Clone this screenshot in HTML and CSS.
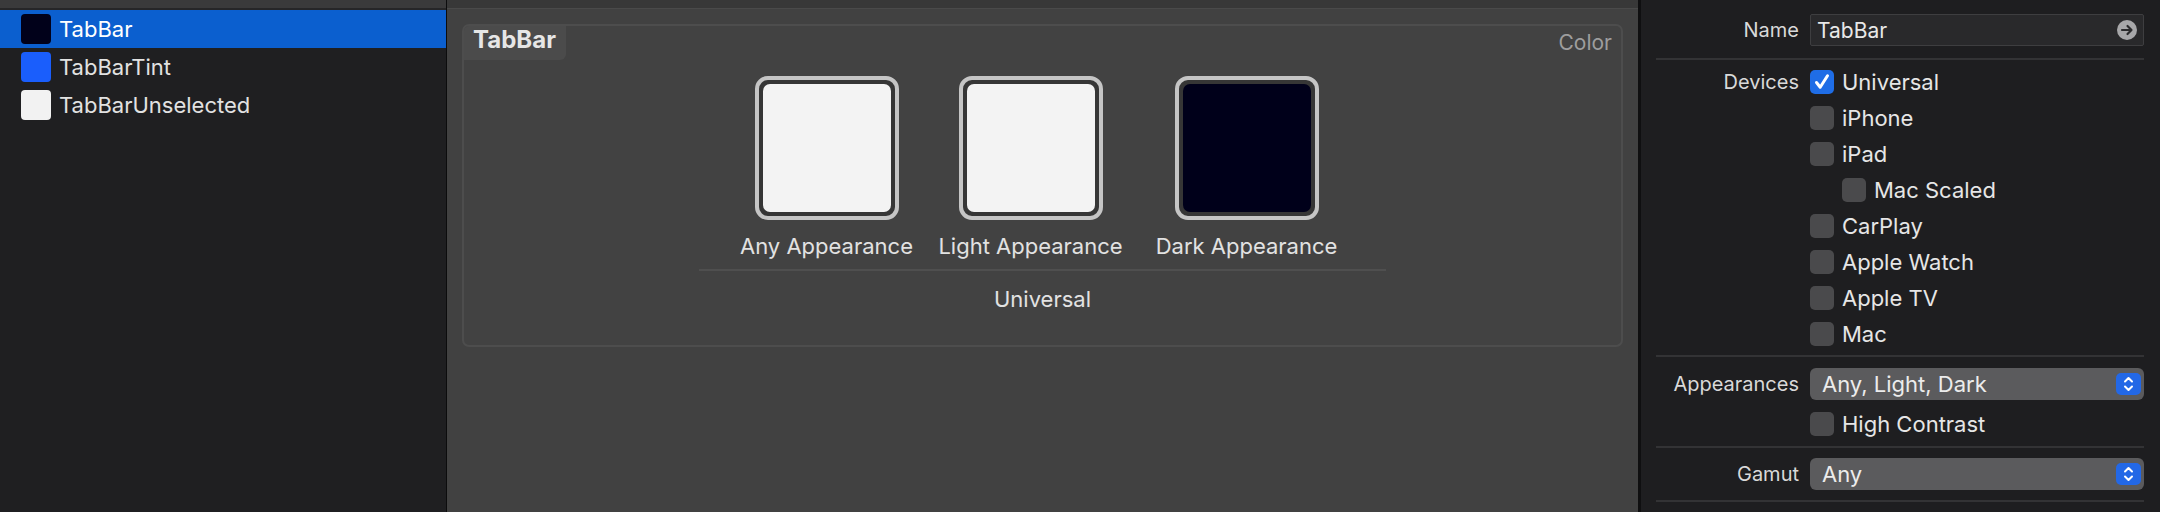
FILE: index.html
```html
<!DOCTYPE html>
<html>
<head>
<meta charset="utf-8">
<link rel="stylesheet" href="styles.css">
</head>
<body>
<div class="app">
  <aside class="sidebar">
    <div class="sidebar-strip"></div>
    <ul class="assets">
      <li class="asset selected"><span class="chip chip-dark"></span><span class="asset-name">TabBar</span></li>
      <li class="asset"><span class="chip chip-blue"></span><span class="asset-name">TabBarTint</span></li>
      <li class="asset"><span class="chip chip-light"></span><span class="asset-name">TabBarUnselected</span></li>
    </ul>
  </aside>

  <main class="editor">
    <div class="editor-strip"></div>
    <section class="card">
      <header class="card-head">
        <span class="card-title">TabBar</span>
        <span class="card-kind">Color</span>
      </header>
      <div class="slots">
        <div class="slot slot-any">
          <div class="well"><div class="fill fill-light"></div></div>
          <div class="slot-label">Any Appearance</div>
        </div>
        <div class="slot slot-light">
          <div class="well"><div class="fill fill-light"></div></div>
          <div class="slot-label">Light Appearance</div>
        </div>
        <div class="slot slot-dark">
          <div class="well"><div class="fill fill-dark"></div></div>
          <div class="slot-label">Dark Appearance</div>
        </div>
      </div>
      <div class="divider"></div>
      <div class="group-label">Universal</div>
    </section>
  </main>

  <aside class="inspector">
    <div class="row row-field">
      <span class="label">Name</span>
      <div class="field">
        <span>TabBar</span>
        <svg class="go" width="20" height="20" viewBox="0 0 20 20"><circle cx="10" cy="10" r="10" fill="#a7a7a9"/><path d="M5 10 H14.5 M10.5 6 L14.5 10 L10.5 14" fill="none" stroke="#2a2a2c" stroke-width="2.2" stroke-linecap="round" stroke-linejoin="round"/></svg>
      </div>
    </div>
    <div class="sep sep-name"></div>

    <div class="devices">
      <div class="row row-check"><span class="label">Devices</span><div class="check"><span class="box box-on"><svg width="24" height="24" viewBox="0 0 24 24"><path d="M6.5 12.5 L10.2 17.2 L17.5 5.8" fill="none" stroke="#fff" stroke-width="3" stroke-linecap="round" stroke-linejoin="round"/></svg></span><span>Universal</span></div></div>
      <div class="row row-check"><span class="label"></span><div class="check"><span class="box"></span><span>iPhone</span></div></div>
      <div class="row row-check"><span class="label"></span><div class="check"><span class="box"></span><span>iPad</span></div></div>
      <div class="row row-check"><span class="label"></span><div class="check indent"><span class="box"></span><span>Mac Scaled</span></div></div>
      <div class="row row-check"><span class="label"></span><div class="check"><span class="box"></span><span>CarPlay</span></div></div>
      <div class="row row-check"><span class="label"></span><div class="check"><span class="box"></span><span>Apple Watch</span></div></div>
      <div class="row row-check"><span class="label"></span><div class="check"><span class="box"></span><span>Apple TV</span></div></div>
      <div class="row row-check"><span class="label"></span><div class="check"><span class="box"></span><span>Mac</span></div></div>
    </div>
    <div class="sep sep-devices"></div>

    <div class="row row-popup row-appear">
      <span class="label">Appearances</span>
      <div class="popup"><span>Any, Light, Dark</span><span class="stepper"><svg width="25" height="22" viewBox="0 0 25 22"><path d="M9 8.5 L12.5 5 L16 8.5 M9 13.5 L12.5 17 L16 13.5" fill="none" stroke="#fff" stroke-width="2" stroke-linecap="round" stroke-linejoin="round"/></svg></span></div>
    </div>
    <div class="row row-check row-contrast"><span class="label"></span><div class="check"><span class="box"></span><span>High Contrast</span></div></div>
    <div class="sep sep-appear"></div>

    <div class="row row-popup row-gamut">
      <span class="label">Gamut</span>
      <div class="popup"><span>Any</span><span class="stepper"><svg width="25" height="22" viewBox="0 0 25 22"><path d="M9 8.5 L12.5 5 L16 8.5 M9 13.5 L12.5 17 L16 13.5" fill="none" stroke="#fff" stroke-width="2" stroke-linecap="round" stroke-linejoin="round"/></svg></span></div>
    </div>
    <div class="sep sep-gamut"></div>
  </aside>
</div>
</body>
</html>
```

FILE: styles.css
```css
* { box-sizing: border-box; }
html, body { margin: 0; padding: 0; }
body {
  width: 2160px;
  height: 512px;
  overflow: hidden;
  background: #1e1e20;
  font-family: "Inter", "Liberation Sans", sans-serif;
  font-size: 21px;
  color: #e4e4e4;
}
.app {
  display: flex;
  height: 512px;
}

/* Sidebar */
.sidebar {
  width: 447px;
  flex: none;
  background: #1f1f21;
  border-right: 1px solid #0c0c0d;
}
.sidebar-strip {
  height: 8px;
  background: #3a3a3b;
  border-bottom: 2px solid #262628;
  box-sizing: content-box;
}
.assets {
  list-style: none;
  margin: 0;
  padding: 0;
}
.asset {
  height: 38px;
  display: flex;
  align-items: center;
  padding-left: 21px;
  gap: 8px;
  color: #e2e2e2;
  font-size: 22px;
}
.asset.selected {
  background: #0b5fcf;
  color: #ffffff;
}
.chip {
  width: 30px;
  height: 30px;
  border-radius: 4px;
  flex: none;
}
.chip-dark { background: #01011a; }
.chip-blue { background: #1a5efc; }
.chip-light { background: #f2f2f2; }

/* Editor */
.editor {
  width: 1194px;
  flex: none;
  background: #414141;
  border-right: 3px solid #0f0f10;
}
.editor-strip {
  height: 8px;
  background: #383838;
  border-bottom: 1px solid #4a4a4a;
  box-sizing: content-box;
}
.card {
  margin: 15px 15px 0 15px;
  height: 323px;
  border: 2px solid #4d4d4d;
  border-radius: 7px;
  background: #424242;
}
.card-head {
  height: 34px;
  display: flex;
  justify-content: space-between;
  align-items: flex-start;
}
.card-title {
  width: 102px;
  height: 34px;
  background: #4b4b4b;
  border-top-left-radius: 5px;
  border-bottom-right-radius: 6px;
  font-weight: 700;
  font-size: 24px;
  line-height: 27px;
  padding: 0 0 7px 9px;
  color: #e6e6e6;
}
.card-kind {
  line-height: 34px;
  padding-right: 9px;
  color: #9e9e9e;
}
.slots {
  display: flex;
  justify-content: center;
  margin-top: 16px;
}
.slot {
  display: flex;
  flex-direction: column;
  align-items: center;
}
.slot-any { width: 200px; }
.slot-light { width: 208px; }
.slot-dark { width: 224px; }
.well {
  width: 144px;
  height: 144px;
  border: 4px solid #c5c5c5;
  border-radius: 13px;
  background: #363636;
  padding: 4px;
}
.fill {
  width: 100%;
  height: 100%;
  border-radius: 7px;
}
.fill-light { background: #f3f3f3; }
.fill-dark { background: #00001a; }
.slot-label {
  margin-top: 13px;
  line-height: 26px;
  font-size: 22px;
  color: #e2e2e2;
  white-space: nowrap;
}
.divider {
  width: 687px;
  height: 2px;
  margin: 10px auto 0;
  background: #4f4f4f;
}
.group-label {
  margin-top: 15px;
  text-align: center;
  font-size: 22px;
  line-height: 26px;
  color: #e2e2e2;
}

/* Inspector */
.inspector {
  flex: 1;
  background: #1e1e20;
  padding: 14px 16px 0 15px;
}
.row {
  display: grid;
  grid-template-columns: 143px 1fr;
  column-gap: 11px;
  align-items: center;
}
.label {
  text-align: right;
  color: #d9d9d9;
  white-space: nowrap;
  font-size: 20px;
}
.row-field { height: 32px; }
.field {
  height: 32px;
  background: #29292b;
  border: 1px solid #3e3e40;
  border-radius: 2px;
  display: flex;
  align-items: center;
  justify-content: space-between;
  padding: 0 6px 0 6px;
  color: #e8e8e8;
}
.go { display: block; }
.sep {
  height: 2px;
  background: #333335;
}
.sep-name { margin-top: 12px; }
.devices { margin-top: 4px; }
.row-check { height: 36px; }
.check {
  display: flex;
  align-items: center;
  gap: 8px;
  color: #e6e6e6;
  font-size: 22px;
}
.check.indent { padding-left: 32px; }
.box {
  width: 24px;
  height: 24px;
  border-radius: 5px;
  background: #4a4a4c;
  flex: none;
}
.box svg { display: block; }
.box-on { background: #1f6de6; }
.sep-devices { margin-top: 3px; }
.row-popup { height: 32px; }
.row-appear { margin-top: 11px; }
.popup {
  height: 32px;
  background: #5b5b5d;
  border-radius: 6px;
  display: flex;
  align-items: center;
  justify-content: space-between;
  padding: 0 3px 0 12px;
  color: #ececec;
  font-size: 22px;
}
.stepper {
  width: 25px;
  height: 22px;
  border-radius: 5px;
  background: #2368e6;
}
.stepper svg { display: block; }
.row-contrast { margin-top: 6px; }
.sep-appear { margin-top: 4px; }
.row-gamut { margin-top: 10px; }
.sep-gamut { margin-top: 10px; }
```
